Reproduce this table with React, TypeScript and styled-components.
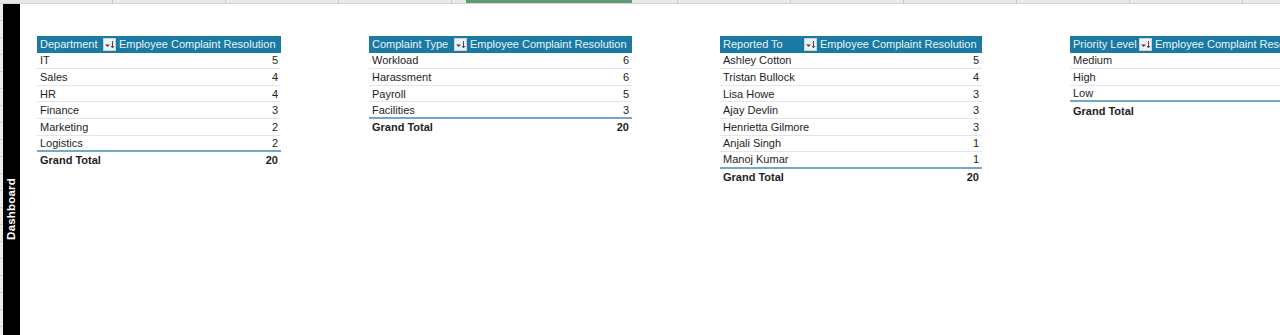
import styled, { createGlobalStyle } from 'styled-components';

const GlobalStyle = createGlobalStyle`
  html, body {
    margin: 0;
    padding: 0;
    background: #ffffff;
  }
  body {
    font-family: 'Liberation Sans', Arial, sans-serif;
  }
`;

const Page = styled.div`
  display: flex;
  flex-direction: column;
  width: 1280px;
  height: 335px;
  overflow: hidden;
  background: #ffffff;
`;

const TopStrip = styled.div`
  position: relative;
  flex: 0 0 3px;
  background: #e9e9e9;
  border-bottom: 1px solid #d4d4d4;
  background-image: repeating-linear-gradient(
    to right,
    transparent 0,
    transparent 112px,
    #c8c8c8 112px,
    #c8c8c8 113px
  );
`;

const ActiveColumn = styled.div`
  position: absolute;
  left: 466px;
  top: 0;
  width: 166px;
  height: 3px;
  background: #5f9a72;
`;

const Body = styled.div`
  flex: 1;
  display: flex;
  min-height: 0;
`;

const Gutter = styled.div`
  flex: 0 0 3px;
  background: #ececec;
  background-image: repeating-linear-gradient(
    to bottom,
    transparent 0,
    transparent 16px,
    #cfcfcf 16px,
    #cfcfcf 17px
  );
`;

const Sidebar = styled.div`
  flex: 0 0 17px;
  display: flex;
  justify-content: center;
  align-items: flex-start;
  padding-top: 174px;
  box-sizing: border-box;
  background: #000000;
`;

const SidebarLabel = styled.span`
  writing-mode: vertical-rl;
  transform: rotate(180deg);
  color: #ffffff;
  font-weight: bold;
  font-size: 11.5px;
  line-height: 17px;
  white-space: nowrap;
  letter-spacing: 0.2px;
`;

const Content = styled.div`
  flex: 1;
  display: flex;
  align-items: flex-start;
  gap: 88px;
  padding: 32px 0 0 17px;
  overflow: hidden;
`;

const Pivot = styled.div<{ $keyWidth: number }>`
  flex: 0 0 auto;
  display: grid;
  grid-template-columns: ${(p) => p.$keyWidth}px 164px;
  font-size: 11px;
  color: #1e1e1e;
`;

const HeaderCell = styled.div<{ $right?: boolean }>`
  display: flex;
  align-items: center;
  justify-content: space-between;
  height: 16.6px;
  padding: 0 ${(p) => (p.$right ? '0 0 2px' : '1px 0 3px')};
  background: #1b7aa3;
  color: #eaf4fa;
  white-space: nowrap;
  overflow: hidden;
`;

const FilterButton = styled.span`
  display: flex;
  align-items: center;
  justify-content: center;
  width: 13px;
  height: 13px;
  background: #eef2f5;
  border: 1px solid #c9d3da;
  box-sizing: border-box;
`;

const Cell = styled.div<{ $right?: boolean; $total?: boolean; $last?: boolean }>`
  display: flex;
  align-items: center;
  justify-content: ${(p) => (p.$right ? 'flex-end' : 'flex-start')};
  height: 16.6px;
  box-sizing: border-box;
  padding: ${(p) => (p.$right ? '0 3px 0 0' : '0 0 0 3px')};
  border-bottom: ${(p) =>
    p.$total ? 'none' : p.$last ? '2px solid #74a8c6' : '1px solid #dfe6ec'};
  font-weight: ${(p) => (p.$total ? 'bold' : 'normal')};
  white-space: nowrap;
`;

type PivotData = {
  field: string;
  keyWidth: number;
  rows: [string, number | null][];
  total: number | null;
};

const pivots: PivotData[] = [
  {
    field: 'Department',
    keyWidth: 80,
    rows: [
      ['IT', 5],
      ['Sales', 4],
      ['HR', 4],
      ['Finance', 3],
      ['Marketing', 2],
      ['Logistics', 2],
    ],
    total: 20,
  },
  {
    field: 'Complaint Type',
    keyWidth: 99,
    rows: [
      ['Workload', 6],
      ['Harassment', 6],
      ['Payroll', 5],
      ['Facilities', 3],
    ],
    total: 20,
  },
  {
    field: 'Reported To',
    keyWidth: 98,
    rows: [
      ['Ashley Cotton', 5],
      ['Tristan Bullock', 4],
      ['Lisa Howe', 3],
      ['Ajay Devlin', 3],
      ['Henrietta Gilmore', 3],
      ['Anjali Singh', 1],
      ['Manoj Kumar', 1],
    ],
    total: 20,
  },
  {
    field: 'Priority Level',
    keyWidth: 83,
    rows: [
      ['Medium', null],
      ['High', null],
      ['Low', null],
    ],
    total: null,
  },
];

function SortFilterIcon() {
  return (
    <svg width="11" height="9" viewBox="0 0 11 9">
      <path d="M1 4.5 L3.5 7 L6 4.5 Z" fill="#4a4a4a" />
      <path d="M8.5 1 V7.5" stroke="#4a4a4a" strokeWidth="1" />
      <path d="M7 6 L8.5 7.8 L10 6" stroke="#4a4a4a" strokeWidth="1" fill="none" />
    </svg>
  );
}

function PivotTable({ field, keyWidth, rows, total }: PivotData) {
  return (
    <Pivot $keyWidth={keyWidth}>
      <HeaderCell>
        <span>{field}</span>
        <FilterButton>
          <SortFilterIcon />
        </FilterButton>
      </HeaderCell>
      <HeaderCell $right>Employee Complaint Resolution</HeaderCell>
      {rows.flatMap(([label, value], i) => [
        <Cell key={label} $last={i === rows.length - 1}>
          {label}
        </Cell>,
        <Cell key={label + '-v'} $right $last={i === rows.length - 1}>
          {value}
        </Cell>,
      ])}
      <Cell $total>Grand Total</Cell>
      <Cell $total $right>
        {total}
      </Cell>
    </Pivot>
  );
}

export default function App() {
  return (
    <Page>
      <GlobalStyle />
      <TopStrip>
        <ActiveColumn />
      </TopStrip>
      <Body>
        <Gutter />
        <Sidebar>
          <SidebarLabel>Dashboard</SidebarLabel>
        </Sidebar>
        <Content>
          {pivots.map((p) => (
            <PivotTable key={p.field} {...p} />
          ))}
        </Content>
      </Body>
    </Page>
  );
}
